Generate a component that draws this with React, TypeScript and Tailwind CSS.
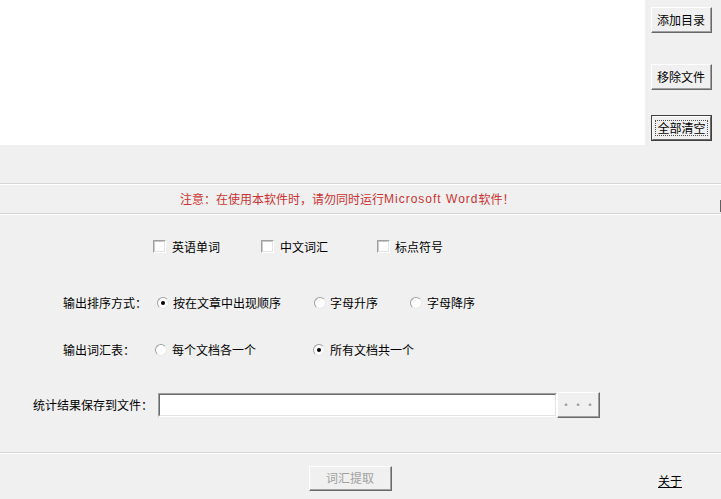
import React from "react";

const font = { fontFamily: '"Noto Sans CJK SC", "Liberation Sans", sans-serif' };

function Btn({ label, focused = false, disabled = false, className = "" }: { label: string; focused?: boolean; disabled?: boolean; className?: string }) {
  if (focused) {
    return (
      <div className={`flex items-stretch border border-[#404040] bg-[#f0f0f0] ${className}`}>
        <div className="flex flex-1 items-center justify-center border-t border-l border-t-white border-l-white border-r border-b border-r-[#696969] border-b-[#696969]">
          <div className="border border-dotted border-[#505050] px-[1px] leading-[14px] text-[12px] text-black">{label}</div>
        </div>
      </div>
    );
  }
  return (
    <div className={`flex items-stretch border-t border-l border-t-white border-l-white border-r border-b border-r-[#696969] border-b-[#696969] bg-[#f0f0f0] ${className}`}>
      <div className={`flex flex-1 items-center justify-center border-r border-b border-r-[#a0a0a0] border-b-[#a0a0a0] text-[12px] ${disabled ? "text-[#a0a0a0]" : "text-black"}`}>
        {label}
      </div>
    </div>
  );
}

function Check() {
  return (
    <div className="h-[13px] w-[13px] border-t border-l border-t-[#a0a0a0] border-l-[#a0a0a0] border-r border-b border-r-white border-b-white">
      <div className="h-full w-full border-t border-l border-t-[#c8c8c8] border-l-[#c8c8c8] border-r border-b border-r-[#e3e3e3] border-b-[#e3e3e3] bg-white" />
    </div>
  );
}

function Radio({ checked = false }: { checked?: boolean }) {
  return (
    <div className="flex h-[12px] w-[12px] items-center justify-center rounded-full border border-t-[#a0a0a0] border-l-[#a0a0a0] border-r-[#e8e8e8] border-b-[#e8e8e8] bg-white">
      {checked && <div className="h-[4px] w-[4px] rounded-full bg-black" />}
    </div>
  );
}

function Groove() {
  return <div className="h-[2px] w-full border-t border-t-[#d5d5d5] border-b border-b-white" />;
}

export default function App() {
  return (
    <div className="relative flex h-[499px] w-[721px] flex-col overflow-hidden bg-[#f0f0f0] text-[12px] leading-[16px] text-black" style={font}>
      {/* top */}
      <div className="flex h-[145px]">
        <div className="h-full w-[645px] bg-white" />
        <div className="flex flex-col pl-[6px]">
          <Btn label="添加目录" className="mt-[7px] h-[26px] w-[61px]" />
          <Btn label="移除文件" className="mt-[31px] h-[26px] w-[61px]" />
          <Btn label="全部清空" focused className="mt-[25px] h-[26px] w-[61px]" />
        </div>
      </div>

      <div className="mt-[38px]">
        <Groove />
      </div>
      <div className="flex h-[28px] items-center pl-[180px] text-[12px] text-[#cc3333]">
        <span>注意：在使用本软件时，请勿同时运行</span>
        <span className="tracking-[1px]" style={{ fontFamily: '"Liberation Sans", sans-serif' }}>Microsoft Word</span>
        <span>软件！</span>
      </div>
      <Groove />

      {/* checkboxes */}
      <div className="mt-[25px] flex h-[13px] items-center">
        <div className="ml-[153px]"><Check /></div>
        <span className="ml-[6px]">英语单词</span>
        <div className="ml-[41px]"><Check /></div>
        <span className="ml-[6px]">中文词汇</span>
        <div className="ml-[49px]"><Check /></div>
        <span className="ml-[5px]">标点符号</span>
      </div>

      {/* sort */}
      <div className="mt-[42px] flex h-[16px] items-center">
        <span className="ml-[63px] w-[94px]">输出排序方式：</span>
        <Radio checked />
        <span className="ml-[4px] w-[141px]">按在文章中出现顺序</span>
        <Radio />
        <span className="ml-[4px] w-[80px]">字母升序</span>
        <Radio />
        <span className="ml-[5px]">字母降序</span>
      </div>

      {/* vocab */}
      <div className="mt-[31px] flex h-[16px] items-center">
        <span className="ml-[63px] w-[92px]">输出词汇表：</span>
        <Radio />
        <span className="ml-[5px] w-[141px]">每个文档各一个</span>
        <Radio checked />
        <span className="ml-[5px]">所有文档共一个</span>
      </div>

      {/* file */}
      <div className="mt-[34px] flex h-[26px] items-center">
        <span className="ml-[33px] w-[125px]">统计结果保存到文件：</span>
        <div className="h-[24px] w-[399px] border-t border-l border-t-[#a0a0a0] border-l-[#a0a0a0] border-r border-b border-r-white border-b-white">
          <div className="h-full w-full border-t border-l border-t-[#696969] border-l-[#696969] border-r border-b border-r-[#e3e3e3] border-b-[#e3e3e3] bg-white" />
        </div>
        <Btn label="···" disabled className="h-[26px] w-[43px]" />
      </div>

      <div className="mt-[34px]">
        <Groove />
      </div>

      {/* bottom */}
      <div className="mt-[12px] flex h-[25px] items-center">
        <Btn label="词汇提取" disabled className="ml-[309px] h-[25px] w-[83px]" />
        <span className="ml-[266px] mt-[4px] underline">关于</span>
      </div>

      <div className="absolute right-0 top-[200px] h-[12px] w-[1px] bg-[#606060]" />
    </div>
  );
}
